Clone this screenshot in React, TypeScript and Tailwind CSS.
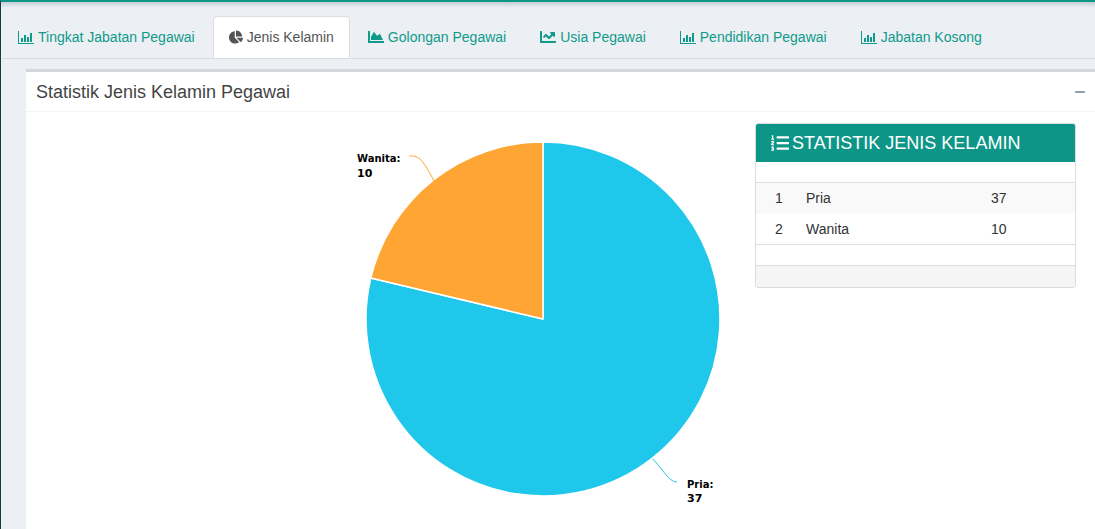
import { FaChartPie, FaChartArea, FaChartLine, FaListOl } from "react-icons/fa";

function BarIcon() {
  return (
    <svg width="16" height="13" viewBox="0 0 16 13" fill="currentColor" className="shrink-0">
      <rect x="0" y="0" width="1" height="13" />
      <rect x="0" y="12" width="16" height="1" />
      <rect x="3" y="7" width="2" height="4" />
      <rect x="6" y="4" width="2" height="7" />
      <rect x="9" y="6" width="2" height="5" />
      <rect x="12" y="2" width="2" height="9" />
    </svg>
  );
}

function Tab({ icon, label, active }: { icon: React.ReactNode; label: string; active?: boolean }) {
  return (
    <div
      className={
        active
          ? "mr-[2px] h-[42px] flex items-center gap-[4px] px-[15px] bg-white border border-[#ddd] border-b-white rounded-t-[4px] text-[#555] -mb-px"
          : "mr-[2px] h-[42px] flex items-center gap-[4px] px-[15px] border border-transparent text-[#0f9a8a]"
      }
    >
      {icon}
      <span>{label}</span>
    </div>
  );
}

function PieChart() {
  return (
    <svg width="718" height="417" viewBox="0 0 718 417" className="shrink-0 block">
      <path d="M517 207 L517 30 A177 177 0 1 1 344.8 166 Z" fill="#1fc8eb" stroke="#fff" strokeWidth="1.5" strokeLinejoin="round" />
      <path d="M517 207 L344.8 166 A177 177 0 0 1 517 30 Z" fill="#ffa533" stroke="#fff" strokeWidth="1.5" strokeLinejoin="round" />
      <path d="M408 69 C395 44 392 44 383 44" fill="none" stroke="#ffa533" strokeWidth="1" />
      <path d="M627 347 C640 362 644 370 651 370" fill="none" stroke="#1fc8eb" strokeWidth="1" />
      <text x="331" y="50" fontFamily="'DejaVu Sans', sans-serif" fontSize="10" fontWeight="700" fill="#000">Wanita:</text>
      <text x="331" y="65" fontFamily="'DejaVu Sans', sans-serif" fontSize="11" fontWeight="700" fill="#000">10</text>
      <text x="661" y="376" fontFamily="'DejaVu Sans', sans-serif" fontSize="10" fontWeight="700" fill="#000">Pria:</text>
      <text x="661" y="390" fontFamily="'DejaVu Sans', sans-serif" fontSize="11" fontWeight="700" fill="#000">37</text>
    </svg>
  );
}

export default function App() {
  return (
    <div className="h-[529px] w-[1095px] overflow-hidden bg-[#ecf0f5] border-l border-[#1c3a46] border-t-2 border-t-[#0d9688] font-['Liberation_Sans',Arial,sans-serif] text-[14px] leading-[20px] text-[#333] relative">
      <div className="absolute left-0 right-0 top-0 h-[6px] bg-gradient-to-b from-[#c9ced6] to-[#ecf0f5]" />
      <div className="relative pt-[14px] pl-px">
        <div className="flex h-[42px] border-b border-[#d8dce2] box-content">
          <Tab icon={<BarIcon />} label="Tingkat Jabatan Pegawai" />
          <Tab active icon={<FaChartPie size={14} />} label="Jenis Kelamin" />
          <Tab icon={<FaChartArea size={16} />} label="Golongan Pegawai" />
          <Tab icon={<FaChartLine size={16} />} label="Usia Pegawai" />
          <Tab icon={<BarIcon />} label="Pendidikan Pegawai" />
          <Tab icon={<BarIcon />} label="Jabatan Kosong" />
        </div>
      </div>
      <div className="ml-[25px] mt-[10px] bg-white border-t-[3px] border-[#d2d6de] h-[470px]">
        <div className="h-[39px] flex items-center justify-between pl-[10px] pr-[10px] border-b border-[#f4f4f4] box-content">
          <span className="text-[18px] text-[#444]">Statistik Jenis Kelamin Pegawai</span>
          <span className="block w-[10px] h-[2px] bg-[#97a0b3]" />
        </div>
        <div className="flex">
          <PieChart />
          <div className="w-[321px] mt-[11px] ml-[11px] self-start border border-[#ddd] rounded-[3px] overflow-hidden">
            <div className="h-[39px] -mt-px bg-[#0d9688] text-white text-[18px] flex items-center gap-[3px] pl-[15px]">
              <FaListOl size={18} />
              <span>STATISTIK JENIS KELAMIN</span>
            </div>
            <table className="w-full border-collapse text-[#333]">
              <thead>
                <tr className="h-[20px] border-b border-[#ddd]">
                  <th className="w-[50px]" />
                  <th className="w-[185px]" />
                  <th />
                </tr>
              </thead>
              <tbody>
                <tr className="h-[32px] bg-[#f9f9f9]">
                  <td className="pl-[19px]">1</td>
                  <td>Pria</td>
                  <td>37</td>
                </tr>
                <tr className="h-[30px] border-b border-[#ddd]">
                  <td className="pl-[19px]">2</td>
                  <td>Wanita</td>
                  <td>10</td>
                </tr>
                <tr className="h-[21px] border-b border-[#ddd]">
                  <td colSpan={3} />
                </tr>
              </tbody>
            </table>
            <div className="h-[21px] bg-[#f5f5f5]" />
          </div>
        </div>
      </div>
    </div>
  );
}
